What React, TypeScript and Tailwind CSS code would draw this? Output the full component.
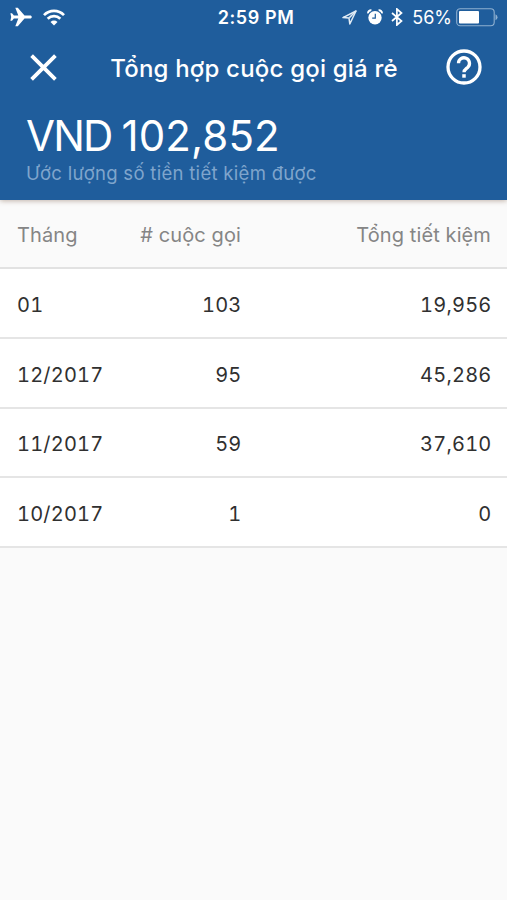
import React from "react";

const rows = [
  { month: "01", calls: "103", saved: "19,956" },
  { month: "12/2017", calls: "95", saved: "45,286" },
  { month: "11/2017", calls: "59", saved: "37,610" },
  { month: "10/2017", calls: "1", saved: "0" },
];

function StatusBar() {
  return (
    <div className="grid h-[34px] grid-cols-[1fr_auto_1fr] items-center pl-[10px] pr-[9px]">
      <div className="flex items-center gap-[11px]">
        <svg width="22" height="20" viewBox="0 0 22 20" fill="#fff">
          <path d="M21.8 10c0-.9-.7-1.5-1.6-1.5h-5.7L7.8.8H5.3l3 7.7H3.9L2 6.2H.4L1.2 10l-.8 3.8H2l1.9-2.3h4.4l-3 7.7h2.5l6.7-7.7h5.7c.9 0 1.6-.6 1.6-1.5Z" />
        </svg>
        <svg width="22" height="17" viewBox="0 0 22 17" fill="none" stroke="#fff" strokeWidth="2.7">
          <path d="M1 6.1a14 14 0 0 1 20 0" />
          <path d="M4.7 9.8a8.9 8.9 0 0 1 12.6 0" />
          <path d="M11 16.6 7.5 13a5 5 0 0 1 7 0Z" fill="#fff" stroke="none" />
        </svg>
      </div>
      <span className="pl-[4px] pt-[2px] text-[18px] font-semibold leading-none tracking-[0.6px]">2:59 PM</span>
      <div className="flex items-center justify-end">
        <svg className="mr-[10px]" width="15" height="15" viewBox="0 0 15 15" fill="none" stroke="#e0ebf5" strokeWidth="1.5" strokeLinejoin="round">
          <path d="M14 1 1 7.6l6 .4.8 6Z" />
          <path d="m14 1-6.7 6.7" strokeWidth="1.6" />
        </svg>
        <svg className="mr-[8px]" width="16" height="17" viewBox="0 0 16 17">
          <path d="M1 4.4A3 3 0 0 1 4.4 1.3M15 4.4A3 3 0 0 0 11.6 1.3" fill="none" stroke="#fff" strokeWidth="1.9" />
          <circle cx="8" cy="8.8" r="6.7" fill="#fff" />
          <path d="M8.3 4.8v4.4H5.2" fill="none" stroke="#1f5d9c" strokeWidth="1.2" />
        </svg>
        <svg className="mr-[9px]" width="12" height="18" viewBox="0 0 12 18" fill="none" stroke="#fff" strokeWidth="1.7">
          <path d="m1 5 9.5 8-4.6 4V1l4.6 4L1 13" />
        </svg>
        <span className="mr-[4px] pt-[2px] text-[18px] leading-none">56%</span>
        <svg width="42" height="19" viewBox="0 0 42 19">
          <rect x=".7" y=".7" width="37.5" height="17" rx="3.5" fill="none" stroke="#8fb0d0" strokeWidth="1.1" />
          <rect x="3" y="3" width="20" height="12.5" rx="1" fill="#fff" />
          <path d="M39.5 6.3q2 1 2 3t-2 3Z" fill="#8fb0d0" />
        </svg>
      </div>
    </div>
  );
}

function Header() {
  return (
    <header className="relative z-10 h-[200px] bg-[#1f5d9c] text-white shadow-[0_1px_5px_rgba(90,50,20,0.35)]">
      <StatusBar />
      <div className="flex h-[66px] items-center justify-between pl-[30px] pr-[25px]">
        <svg width="27" height="27" viewBox="0 0 27 27" stroke="#fff" strokeWidth="3.8">
          <path d="m1.6 1.6 23.8 23.8M25.4 1.6 1.6 25.4" />
        </svg>
        <h1 className="pl-[5px] pt-[4px] text-[24px] font-medium leading-none tracking-[0.2px]">Tổng hợp cuộc gọi giá rẻ</h1>
        <svg width="36" height="36" viewBox="0 0 36 36" fill="none" stroke="#fff" strokeWidth="3.3">
          <circle cx="18" cy="18" r="16" />
          <path d="M12.5 14.3a5.5 5.5 0 1 1 9.4 3.9C20 20 18 20.7 18 23.3" />
          <path d="M18 25.2v3.5" strokeWidth="3.5" />
        </svg>
      </div>
      <div className="flex flex-col pl-[26px]">
        <p className="mt-[15px] text-[42px] leading-[42px]">
          <span className="tracking-[-1.8px]">VND </span>
          <span className="tracking-[0.1px]">102,852</span>
        </p>
        <span className="mt-[4px] text-[18.5px] leading-[24px] tracking-[0.3px] text-[#7fa5cc]">Ước lượng số tiền tiết kiệm được</span>
      </div>
    </header>
  );
}

export default function App() {
  return (
    <div className="h-[900px] w-[507px] overflow-hidden bg-[#fafafa] font-['Inter','Liberation_Sans',sans-serif]">
      <Header />
      <div className="grid h-[69px] grid-cols-[112px_112px_1fr] items-center border-b-2 border-[#e2e2e2] pl-[17px] pr-4 pt-[3px] text-[20px] tracking-[0.1px] text-[#858585]">
        <span>Tháng</span>
        <span className="text-right">
          # cuộc gọi
        </span>
        <span className="text-right">Tổng tiết kiệm</span>
      </div>
      {rows.map((row) => (
        <div
          key={row.month}
          className="grid h-[69.75px] grid-cols-[112px_112.5px_1fr] items-center border-b-2 border-[#e5e5e5] bg-white pl-[17px] pr-[15.5px] pt-[4px] text-[20px] tracking-[0.2px] tabular-nums text-[#303030]"
        >
          <span>{row.month}</span>
          <span className="text-right">{row.calls}</span>
          <span className="text-right">{row.saved}</span>
        </div>
      ))}
    </div>
  );
}
